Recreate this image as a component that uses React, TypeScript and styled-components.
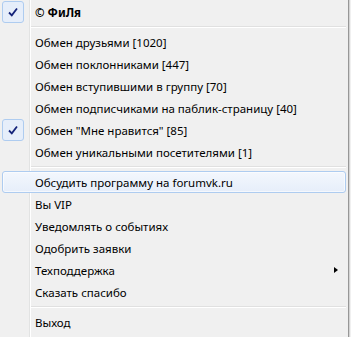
import React from "react";
import styled, {createGlobalStyle} from "styled-components";

const Global = createGlobalStyle`
  html, body {
    margin: 0;
    padding: 0;
    background: #f0f0f0;
  }
`;

const Menu = styled.div`
  position: relative;
  width: 349px;
  height: 337px;
  box-sizing: border-box;
  padding-top: 1px;
  background: #f0f0f0;
  border-right: 1px solid #979797;
  box-shadow: 1px 0 0 #d4d4d4;
  font-family: "Noto Sans", "DejaVu Sans", sans-serif;
  font-size: 11.5px;
  color: #000;
  display: flex;
  flex-direction: column;

  &::before {
    content: "";
    position: absolute;
    top: 0;
    bottom: 0;
    left: 29px;
    width: 1px;
    background: #e2e3e3;
    border-right: 1px solid #fff;
  }
`;

const Item = styled.div<{$hover?: boolean; $bold?: boolean}>`
  position: relative;
  z-index: 1;
  height: 22px;
  margin: 0 2px;
  display: flex;
  align-items: center;
  padding-left: 32px;
  box-sizing: border-box;
  font-weight: ${p => (p.$bold ? 700 : 400)};
  border-radius: 3px;
  border: 1px solid ${p => (p.$hover ? "#aeccf0" : "transparent")};
  background: ${p => (p.$hover ? "linear-gradient(#f3f7fd, #e6eefa)" : "transparent")};
  box-shadow: ${p => (p.$hover ? "inset 0 0 0 1px rgba(255,255,255,0.6)" : "none")};
  white-space: nowrap;
`;

const Check = styled.span`
  position: absolute;
  left: -1px;
  top: -1px;
  width: 22px;
  height: 22px;
  box-sizing: border-box;
  border: 1px solid #aeccf0;
  border-radius: 3px;
  background: #e6eefa;
  display: flex;
  align-items: center;
  justify-content: center;
`;

const Arrow = styled.span`
  position: absolute;
  right: 7px;
  top: 7px;
  width: 0;
  height: 0;
  border-top: 3.5px solid transparent;
  border-bottom: 3.5px solid transparent;
  border-left: 4px solid #000;
`;

const Separator = styled.div`
  height: 8px;
  display: flex;
  align-items: center;
  padding-left: 30px;
  padding-right: 2px;

  &::after {
    content: "";
    flex: 1;
    height: 1px;
    background: #e0e0e0;
    border-bottom: 1px solid #fff;
  }
`;

const Tick = () => (
    <svg width="10" height="10" viewBox="0 0 10 10">
        <path d="M1 5.5 L3.8 8.3 L9 1.5" fill="none" stroke="#14237a" strokeWidth="1.8"/>
    </svg>
);

const App = () => (
    <>
        <Global/>
        <Menu>
            <Item $bold><Check><Tick/></Check>© ФиЛя</Item>
            <Separator/>
            <Item>Обмен друзьями [1020]</Item>
            <Item>Обмен поклонниками [447]</Item>
            <Item>Обмен вступившими в группу [70]</Item>
            <Item>Обмен подписчиками на паблик-страницу [40]</Item>
            <Item><Check><Tick/></Check>Обмен "Мне нравится" [85]</Item>
            <Item>Обмен уникальными посетителями [1]</Item>
            <Separator/>
            <Item $hover>Обсудить программу на forumvk.ru</Item>
            <Item>Вы VIP</Item>
            <Item>Уведомлять о событиях</Item>
            <Item>Одобрить заявки</Item>
            <Item>Техподдержка<Arrow/></Item>
            <Item>Сказать спасибо</Item>
            <Separator/>
            <Item>Выход</Item>
        </Menu>
    </>
);

export default App;
